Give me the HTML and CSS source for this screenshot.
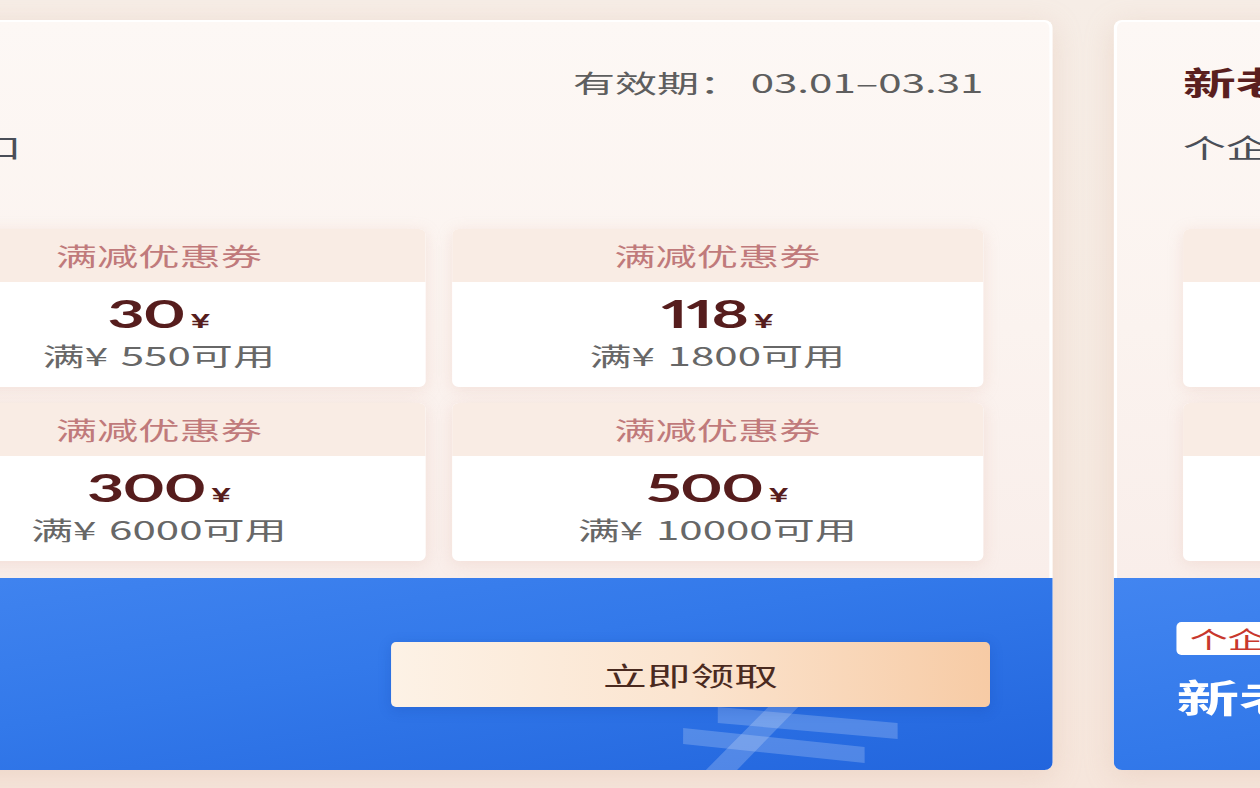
FILE: index.html
```html
<!DOCTYPE html>
<html lang="zh-CN">
<head>
<meta charset="utf-8">
<title>优惠券</title>
<link rel="stylesheet" href="styles.css">
</head>
<body>
<div class="stage">
  <div class="track">
    <section class="card">
      <div class="card-top">
        <div class="title-row">
          <span class="title"></span>
          <span class="date">有效期： 03.01–03.31</span>
        </div>
        <div class="subtitle">总入口</div>
        <div class="coupons">
          <div class="coupon">
            <div class="coupon-head">满减优惠券</div>
            <div class="coupon-body">
              <div class="amount">30<span class="yen">¥</span></div>
              <div class="cond">满¥ 550可用</div>
            </div>
          </div>
          <div class="coupon">
            <div class="coupon-head">满减优惠券</div>
            <div class="coupon-body">
              <div class="amount">118<span class="yen">¥</span></div>
              <div class="cond">满¥ 1800可用</div>
            </div>
          </div>
          <div class="coupon">
            <div class="coupon-head">满减优惠券</div>
            <div class="coupon-body">
              <div class="amount">300<span class="yen">¥</span></div>
              <div class="cond">满¥ 6000可用</div>
            </div>
          </div>
          <div class="coupon">
            <div class="coupon-head">满减优惠券</div>
            <div class="coupon-body">
              <div class="amount">500<span class="yen">¥</span></div>
              <div class="cond">满¥ 10000可用</div>
            </div>
          </div>
        </div>
      </div>
      <div class="card-bottom">
        <svg class="watermark" viewBox="0 0 745 192" preserveAspectRatio="none" aria-hidden="true">
          <polygon points="562,72 580,70 606,110 590,114"/>
          <polygon points="640,72 660,74 608,114 592,110"/>
          <polygon points="542,129 651,145 651,161 542,145"/>
          <polygon points="521,150 631,169 631,185 521,166"/>
          <polygon points="584,110 602,110 549,200 530,200"/>
        </svg>
        <div class="spacer"></div>
        <button class="claim">立即领取</button>
      </div>
    </section>

    <section class="card">
      <div class="card-top">
        <div class="title-row">
          <span class="title">新老客户福利</span>
          <span class="date">有效期： 03.01–03.31</span>
        </div>
        <div class="subtitle">个企专享优惠</div>
        <div class="coupons">
          <div class="coupon">
            <div class="coupon-head">满减优惠券</div>
            <div class="coupon-body">
              <div class="amount">30<span class="yen">¥</span></div>
              <div class="cond">满¥ 550可用</div>
            </div>
          </div>
          <div class="coupon">
            <div class="coupon-head">满减优惠券</div>
            <div class="coupon-body">
              <div class="amount">118<span class="yen">¥</span></div>
              <div class="cond">满¥ 1800可用</div>
            </div>
          </div>
          <div class="coupon">
            <div class="coupon-head">满减优惠券</div>
            <div class="coupon-body">
              <div class="amount">300<span class="yen">¥</span></div>
              <div class="cond">满¥ 6000可用</div>
            </div>
          </div>
          <div class="coupon">
            <div class="coupon-head">满减优惠券</div>
            <div class="coupon-body">
              <div class="amount">500<span class="yen">¥</span></div>
              <div class="cond">满¥ 10000可用</div>
            </div>
          </div>
        </div>
      </div>
      <div class="card-bottom">
        <div class="promo">
          <span class="tag">个企专享</span>
          <div class="promo-title">新老客户专享</div>
        </div>
      </div>
    </section>
  </div>
</div>
</body>
</html>
```

FILE: styles.css
```css
html, body {
  margin: 0;
  padding: 0;
}

body {
  width: 1260px;
  height: 788px;
  overflow: hidden;
  background: linear-gradient(180deg, #f6ede6 0%, #f5e9e0 60%, #f6e6dc 100%);
  font-family: "Noto Sans CJK SC", "Noto Sans", sans-serif;
}

/* the reference is horizontally stretched; lay out at natural size and stretch */
.stage {
  width: 764px;
  height: 788px;
  transform: scaleX(1.65);
  transform-origin: 0 0;
}

.track {
  display: flex;
  gap: 37px;
  margin-left: -107px;
  padding-top: 20px;
}

.card {
  flex: 0 0 745px;
  height: 750px;
  display: flex;
  flex-direction: column;
  border-radius: 5px / 8px;
  overflow: hidden;
  box-shadow: 0 6px 22px rgba(214, 170, 145, 0.28);
  background: #fcf6f3;
}

.card-top {
  flex: 1;
  box-sizing: border-box;
  padding: 39px 40px 17px;
  border: 2px solid #ffffff;
  border-bottom: none;
  border-radius: 5px 5px 0 0 / 8px 8px 0 0;
  background: linear-gradient(180deg, #fdf8f5 0%, #fbf3ef 55%, #f9eeea 100%);
}

.title-row {
  height: 40px;
  display: flex;
  justify-content: space-between;
  align-items: center;
}

.title {
  font-size: 32px;
  font-weight: 700;
  color: #5a1f1f;
  white-space: nowrap;
}

.date {
  font-size: 25.5px;
  color: #5e5e5e;
  white-space: nowrap;
}

.subtitle {
  margin-top: 28px;
  height: 36px;
  line-height: 36px;
  font-size: 26px;
  color: #4a4e57;
  white-space: nowrap;
}

.coupons {
  margin-top: 64px;
  display: grid;
  grid-template-columns: 1fr 1fr;
  gap: 16px 16px;
}

.coupon {
  background: #ffffff;
  border-radius: 4px / 6px;
  overflow: hidden;
  box-shadow: 0 3px 12px rgba(226, 180, 165, 0.28);
}

.coupon-head {
  height: 53px;
  line-height: 53px;
  text-align: center;
  background: #f9ece4;
  color: #c07a7b;
  font-size: 25px;
}

.coupon-body {
  height: 105px;
  box-sizing: border-box;
  padding-top: 9px;
  text-align: center;
}

.amount {
  height: 44px;
  line-height: 44px;
  font-family: "Lato", "Liberation Sans", sans-serif;
  font-variant-numeric: proportional-nums;
  font-weight: 700;
  font-size: 39px;
  letter-spacing: -1px;
  color: #561d1d;
}

.yen {
  margin-left: 4px;
  letter-spacing: 0;
  font-family: "Liberation Sans", sans-serif;
  font-size: 21px;
  font-weight: 700;
}

.cond {
  margin-top: 4px;
  line-height: 32px;
  font-size: 25.5px;
  word-spacing: 2px;
  color: #676767;
  white-space: nowrap;
}

.card-bottom {
  position: relative;
  height: 192px;
  flex: 0 0 192px;
  box-sizing: border-box;
  padding: 0 38px;
  display: flex;
  align-items: center;
  overflow: hidden;
  background: linear-gradient(165deg, #4285f0 0%, #3379ea 45%, #2265dd 100%);
}

.spacer {
  flex: 1;
}

.claim {
  position: relative;
  width: 363px;
  height: 65px;
  border: none;
  border-radius: 3px / 5px;
  background: linear-gradient(90deg, #fdf2e6 0%, #fbe4cf 50%, #f7cba5 100%);
  color: #4a2a1f;
  font-family: "Noto Sans CJK SC", "Noto Sans", sans-serif;
  font-size: 26.5px;
  padding: 0;
  box-shadow: 0 3px 10px rgba(20, 60, 160, 0.22);
}

.watermark {
  position: absolute;
  left: 0;
  top: 0;
  width: 745px;
  height: 192px;
  fill: rgba(255, 255, 255, 0.2);
  pointer-events: none;
}

.promo {
  display: flex;
  flex-direction: column;
  align-items: flex-start;
  margin-top: -6px;
}

.tag {
  height: 33px;
  line-height: 33px;
  padding: 0 8px;
  background: #ffffff;
  border-radius: 3px / 5px;
  color: #c8372d;
  font-size: 23px;
  white-space: nowrap;
}

.promo-title {
  margin-top: 16px;
  font-size: 38px;
  font-weight: 700;
  color: #ffffff;
  white-space: nowrap;
  line-height: 50px;
}
```
